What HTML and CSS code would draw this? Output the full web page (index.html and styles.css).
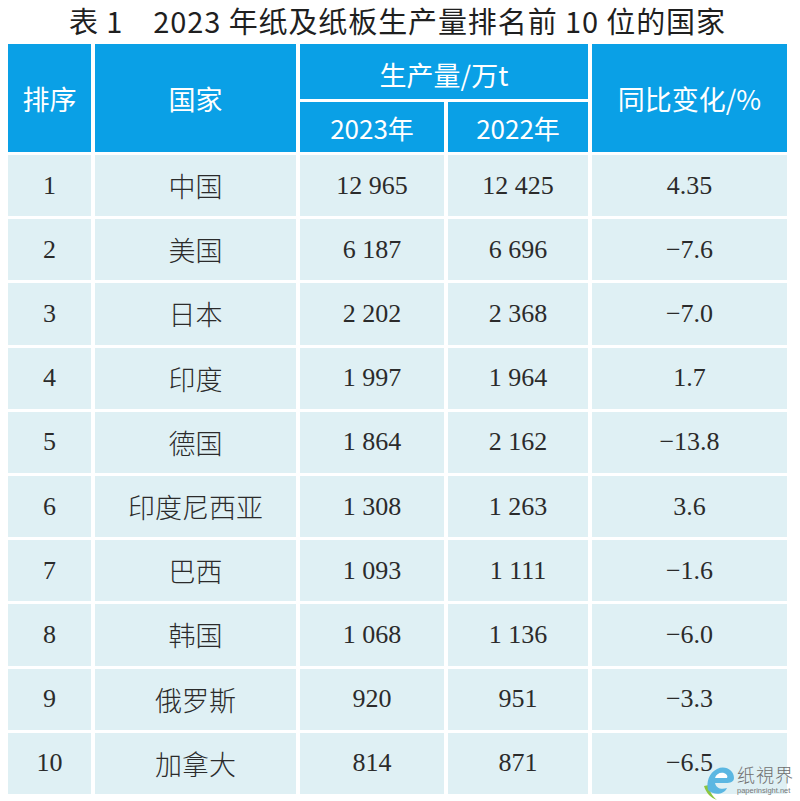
FILE: index.html
```html
<!DOCTYPE html>
<html lang="zh-CN">
<head>
<meta charset="utf-8">
<title>表1 2023年纸及纸板生产量排名前10位的国家</title>
<link rel="stylesheet" href="styles.css">
</head>
<body>
<div class="page">
  <h1 class="title">表 1　2023 年纸及纸板生产量排名前 10 位的国家</h1>
  <div class="grid">
    <div class="hd span-rows c1">排序</div>
    <div class="hd span-rows c2">国家</div>
    <div class="hd c34">生产量/万t</div>
    <div class="hd span-rows c5">同比变化/%</div>
    <div class="hd sub c3">2023年</div>
    <div class="hd sub c4">2022年</div>

    <div class="cell num">1</div><div class="cell name">中国</div><div class="cell num">12 965</div><div class="cell num">12 425</div><div class="cell num">4.35</div>
    <div class="cell num">2</div><div class="cell name">美国</div><div class="cell num">6 187</div><div class="cell num">6 696</div><div class="cell num">−7.6</div>
    <div class="cell num">3</div><div class="cell name">日本</div><div class="cell num">2 202</div><div class="cell num">2 368</div><div class="cell num">−7.0</div>
    <div class="cell num">4</div><div class="cell name">印度</div><div class="cell num">1 997</div><div class="cell num">1 964</div><div class="cell num">1.7</div>
    <div class="cell num">5</div><div class="cell name">德国</div><div class="cell num">1 864</div><div class="cell num">2 162</div><div class="cell num">−13.8</div>
    <div class="cell num">6</div><div class="cell name">印度尼西亚</div><div class="cell num">1 308</div><div class="cell num">1 263</div><div class="cell num">3.6</div>
    <div class="cell num">7</div><div class="cell name">巴西</div><div class="cell num">1 093</div><div class="cell num">1 111</div><div class="cell num">−1.6</div>
    <div class="cell num">8</div><div class="cell name">韩国</div><div class="cell num">1 068</div><div class="cell num">1 136</div><div class="cell num">−6.0</div>
    <div class="cell num">9</div><div class="cell name">俄罗斯</div><div class="cell num">920</div><div class="cell num">951</div><div class="cell num">−3.3</div>
    <div class="cell num">10</div><div class="cell name">加拿大</div><div class="cell num">814</div><div class="cell num">871</div><div class="cell num">−6.5</div>
  </div>
  <div class="watermark">
    <svg class="logo" width="36" height="40" viewBox="0 0 36 40">
      <path d="M4 26 C6 33 11 38 17 40 C12 36 9 31 9 25 Z" fill="#8cc63f"/>
      <path d="M8 30 C6 22 9 13 17 9 C25 5 34 10 34 18 C34 22 30 23 26 23 L15 23 C16 28 21 30 27 28 C25 33 18 35 13 33 C10 32 9 31 8 30 Z" fill="#5bb7e2"/>
      <path d="M15 18 C16 14 20 12 24 13 C27 14 28 16 27 18 Z" fill="#ffffff"/>
    </svg>
    <div class="wm-text">
      <span class="wm-cn">纸視界</span>
      <span class="wm-en">paperinsight.net</span>
    </div>
  </div>
</div>
</body>
</html>
```

FILE: styles.css
```css
html, body {
  margin: 0;
  padding: 0;
  background: #ffffff;
}

.page {
  position: relative;
  width: 800px;
  height: 801px;
  box-sizing: border-box;
  padding: 0 0 0 8px;
  overflow: hidden;
}

.title {
  margin: 0;
  width: 779px;
  height: 44px;
  box-sizing: border-box;
  padding-top: 1px;
  text-align: center;
  font-family: "Noto Sans CJK SC", "Noto Sans", sans-serif;
  font-weight: 400;
  font-size: 29px;
  line-height: 38px;
  color: #1f1f1f;
  letter-spacing: 0.9px;
  white-space: pre;
}

.grid {
  display: grid;
  width: 779px;
  grid-template-columns: 83px 201px 144px 140px 195px;
  grid-template-rows: 55px 50px repeat(10, 61.2px);
  column-gap: 4px;
  row-gap: 3px;
}

.hd {
  background: #0aa0e6;
  color: #ffffff;
  display: flex;
  align-items: center;
  justify-content: center;
  font-family: "Noto Sans CJK SC", "Noto Sans", sans-serif;
  font-size: 27px;
  font-weight: 400;
}

.span-rows { grid-row: 1 / span 2; }
.c1 { grid-column: 1; }
.c2 { grid-column: 2; }
.c34 { grid-column: 3 / span 2; grid-row: 1; padding-top: 6px; }
.c5 { grid-column: 5; }
.c3 { grid-column: 3; grid-row: 2; }
.c4 { grid-column: 4; grid-row: 2; }
.sub { font-size: 26px; }

.cell {
  background: #dff0f4;
  color: #2b2b2b;
  display: flex;
  align-items: center;
  justify-content: center;
}

.num {
  font-family: "Liberation Serif", "Times New Roman", serif;
  font-size: 26px;
}

.name {
  font-family: "Noto Sans CJK SC", sans-serif;
  font-weight: 300;
  font-size: 27px;
}

.watermark {
  position: absolute;
  left: 700px;
  top: 760px;
  display: flex;
  align-items: flex-start;
  gap: 1px;
}

.logo {
  display: block;
}

.wm-text {
  display: flex;
  flex-direction: column;
  padding-top: 2px;
}

.wm-cn {
  font-family: "Noto Sans CJK TC", sans-serif;
  font-weight: 300;
  font-size: 18px;
  line-height: 24px;
  letter-spacing: 1px;
  color: #6f6f6f;
}

.wm-en {
  font-family: "Liberation Sans", sans-serif;
  font-size: 7.5px;
  line-height: 9px;
  color: #777777;
  margin-top: 0;
}
```
